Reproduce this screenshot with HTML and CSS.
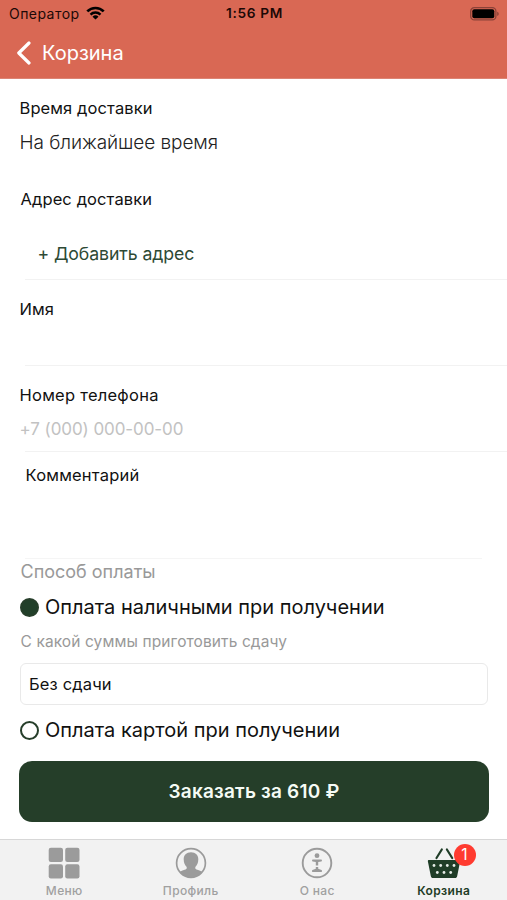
FILE: index.html
```html
<!DOCTYPE html>
<html lang="ru">
<head>
<meta charset="utf-8">
<meta name="viewport" content="width=device-width, initial-scale=1">
<title>Корзина</title>
<link rel="stylesheet" href="styles.css">
</head>
<body>
<div class="screen">
  <header class="header">
    <div class="status">
      <div class="carrier">
        <span class="carrier-name">Оператор</span>
        <svg class="wifi" viewBox="0 0 19 14" width="19" height="14"><path d="M1.300 5.400a11.600 11.600 0 0 1 16.400 0" fill="none" stroke="currentColor" stroke-width="2.700"/><path d="M4.500 8.600a7.100 7.100 0 0 1 10 0" fill="none" stroke="currentColor" stroke-width="2.400"/><path d="M9.500 13.600 6.500 10.700a4.300 4.300 0 0 1 6 0Z" fill="currentColor"/></svg>
      </div>
      <span class="clock">1:56 PM</span>
      <svg class="battery" viewBox="0 0 30 14" width="30" height="14"><rect x=".7" y=".7" width="25.2" height="12.2" rx="3.6" fill="none" stroke="#8c4238" stroke-width="1.3"/><rect x="2.3" y="2.3" width="22" height="9" rx="2" fill="#000"/><path d="M27.2 4.8c2 .6 2 3.600 0 4.200Z" fill="#8c4238"/></svg>
    </div>
    <div class="navbar">
      <svg class="back" viewBox="0 0 16 24" width="16" height="24"><path d="M13 2 2.800 12 13 22" fill="none" stroke="#fff" stroke-width="3.200" stroke-linecap="round" stroke-linejoin="round"/></svg>
      <h1 class="title">Корзина</h1>
    </div>
  </header>

  <main class="form">
    <section class="time">
      <h2 class="label label-time">Время доставки</h2>
      <p class="time-value">На ближайшее время</p>
    </section>
    <section class="field address">
      <h2 class="label label-address">Адрес доставки</h2>
      <a class="add">+ Добавить адрес</a>
    </section>
    <section class="field name">
      <h2 class="label label-name">Имя</h2>
    </section>
    <section class="field phone">
      <h2 class="label label-phone">Номер телефона</h2>
      <p class="placeholder">+7 (000) 000-00-00</p>
    </section>
    <section class="field comment">
      <h2 class="label label-comment">Комментарий</h2>
    </section>
    <section class="payment">
      <h2 class="payment-title">Способ оплаты</h2>
      <div class="option"><span class="radio checked"></span><span class="cash">Оплата наличными при получении</span></div>
      <p class="hint">С какой суммы приготовить сдачу</p>
      <div class="change"><span class="change-text">Без сдачи</span></div>
      <div class="option"><span class="radio"></span><span class="card">Оплата картой при получении</span></div>
      <button class="order"><span class="order-text">Заказать за 610 ₽</span></button>
    </section>
  </main>

  <nav class="tabs">
    <a class="tab">
      <svg viewBox="0 0 32 32" width="32" height="32" fill="#9b9b9b"><rect x=".7" y=".7" width="14.300" height="14.300" rx="2.200"/><rect x="17.200" y=".7" width="14.300" height="14.300" rx="2.200"/><rect x=".7" y="17.200" width="14.300" height="14.300" rx="2.200"/><rect x="17.200" y="17.200" width="14.300" height="14.300" rx="2.200"/></svg>
      <span class="tab-menu">Меню</span>
    </a>
    <a class="tab">
      <svg viewBox="0 0 32 32" width="32" height="32"><circle cx="16" cy="16" r="14.400" fill="none" stroke="#9b9b9b" stroke-width="1.700"/><path d="M16 5.300c4.600 0 7.400 3 7.300 7 0 3.700-1.200 5.800-3 7.600v1.600c1 1.500 4.400 1.700 6.700 3.300C24.500 28.600 20.500 30.600 16 30.600S7.500 28.600 5 24.800c2.300-1.600 5.700-1.800 6.700-3.300v-1.600c-1.800-1.800-3-3.900-3-7.600-.1-4 2.700-7 7.300-7Z" fill="#9b9b9b"/></svg>
      <span class="tab-profile">Профиль</span>
    </a>
    <a class="tab">
      <svg viewBox="0 0 32 32" width="32" height="32"><circle cx="16" cy="16" r="14.300" fill="none" stroke="#9b9b9b" stroke-width="1.900"/><circle cx="16" cy="8.700" r="2.400" fill="#9b9b9b"/><path d="M11.800 12.500h8.400c1 0 1 1.900 0 2l-3 .5v3.500h-2.400V15l-3-.5c-1-.1-1-2 0-2ZM14.800 20h2.400v1.700l3.300 1.200c.8.300.8 2.100-.2 2.100h-8.600c-1 0-1-1.800-.2-2.100l3.300-1.200Z" fill="#9b9b9b"/></svg>
      <span class="tab-about">О нас</span>
    </a>
    <a class="tab active">
      <svg viewBox="0 0 34 32" width="34" height="32"><path d="m9.500 11 5.300-8.500M25.200 11l-5.300-8.500" stroke="#1f3d27" stroke-width="2.200" stroke-linecap="round"/><path d="M2 13h30c1 0 1.300.6 1.100 1.500l-2.900 14.600c-.3 1.400-1 2-2.200 2H6c-1.200 0-1.900-.6-2.200-2L.9 14.500C.7 13.600 1 13 2 13Z" fill="#1f3d27"/><g fill="#e5ebe6"><circle cx="7" cy="18.500" r="1.400"/><circle cx="13.700" cy="18.500" r="1.400"/><circle cx="20.300" cy="18.500" r="1.400"/><circle cx="27" cy="18.500" r="1.400"/><circle cx="10.300" cy="25.500" r="1.400"/><circle cx="17" cy="25.500" r="1.400"/><circle cx="23.700" cy="25.500" r="1.400"/></g></svg>
      <span class="tab-cart">Корзина</span>
      <span class="badge">1</span>
    </a>
  </nav>
</div>
</body>
</html>
```

FILE: styles.css
```css
* { box-sizing: border-box; }
body, h1, h2, p { margin: 0; font-weight: 400; }
body { font-family: Inter, "Liberation Sans", sans-serif; color: #111; background: #fff; }
span, h1, h2, p, a { white-space: nowrap; }
svg { display: block; flex: none; }
.screen { width: 507px; height: 900px; display: flex; flex-direction: column; overflow: hidden; }

.header { height: 79px; background: #d96854; border-bottom: 1px solid #dc8474; }
.status { height: 28px; padding: 0 7px 0 9px; display: grid; grid-template-columns: 1fr auto 1fr; align-items: center; color: #1c0806; }
.carrier { display: flex; align-items: center; gap: 6px; }
.carrier-name { margin-top: -2px; font-size: 14px; letter-spacing: .45px; }
.wifi { color: #000; margin-top: -2px; }
.clock { margin-top: -2px; font-size: 13.7px; font-weight: 600; letter-spacing: .65px; }
.battery { justify-self: end; margin-top: -1px; }
.navbar { height: 50px; display: flex; align-items: center; padding-left: 16px; gap: 10px; }
.title { font-size: 20px; line-height: 24px; color: #fff; }

.form { height: 760px; padding-top: 17px; }
.label { font-size: 16.5px; line-height: 24px; letter-spacing: .1px; color: #111; }
.time { height: 90px; padding-left: 19.5px; }
.time-value { margin-top: 9px; font-size: 19px; line-height: 28px; letter-spacing: -.07px; font-weight: 300; color: #222; }
.field { padding-left: 19.5px; border-bottom: 1px solid transparent; border-image: linear-gradient(to right, transparent 26px, #f2f2f2 26px) 1; }
.address { height: 94px; padding-top: 1px; }
.label-address { padding-left: 1px; }
.add { display: block; margin: 30px 0 0 18px; font-size: 17.7px; line-height: 26px; letter-spacing: -.1px; color: #2d4934; }
.name { height: 86px; padding-top: 17px; }
.phone { height: 86px; padding-top: 17px; }
.label-phone { letter-spacing: .25px; }
.placeholder { margin-top: 10px; font-size: 17px; line-height: 24px; letter-spacing: -.08px; color: #c2c2c2; }
.comment { height: 107px; padding: 11px 0 0 25.5px; border-image: linear-gradient(to right, transparent 26px, #f5f5f5 26px, #f5f5f5 481px, transparent 481px) 1; }
.label-comment { letter-spacing: .2px; }
.payment { padding: 0 19px; }
.payment-title { padding: 1px 0 0 1.5px; font-size: 18px; line-height: 24px; color: #999; }
.option { height: 26px; margin-top: 10px; display: flex; align-items: center; gap: 6px; padding-left: 1px; font-size: 20px; color: #111; }
.radio { width: 19px; height: 19px; border: 2px solid #263e2a; border-radius: 50%; }
.checked { background: #213f29; }
.hint { margin-top: 11px; padding-left: 1.5px; font-size: 15.5px; line-height: 22px; letter-spacing: .1px; color: #999; }
.change { height: 42px; margin: 10px 0 0 1px; width: 468px; border: 1px solid #e9e9e9; border-radius: 6px; padding: 0 0 0 8px; display: flex; align-items: center; font-size: 16.5px; letter-spacing: .15px; }
.change + .option { margin-top: 12px; }
.order { width: 470px; height: 61px; margin-top: 18px; padding: 0; display: flex; align-items: center; justify-content: center; border: 0; border-radius: 13px; background: #253e29; color: #f5fbf5; font: 600 19px Inter, sans-serif; letter-spacing: .2px; }

.tabs { height: 61px; padding-left: 1px; display: grid; grid-template-columns: repeat(4, 1fr); background: #f2f2f2; border-top: 1px solid #d7d7d7; }
.tab { position: relative; display: flex; flex-direction: column; align-items: center; padding-top: 7px; font-size: 12px; line-height: 16px; font-weight: 500; letter-spacing: .35px; color: #a0a0a0; }
.tab span:not(.badge) { margin-top: 4px; }
.active { color: #1f3d27; font-weight: 600; }
.badge { position: absolute; left: 73px; top: 4px; width: 22px; height: 22px; border-radius: 50%; background: #ff3b30; color: #fff; font-size: 15.500px; line-height: 22px; font-weight: 400; letter-spacing: 0; text-align: center; }
```
